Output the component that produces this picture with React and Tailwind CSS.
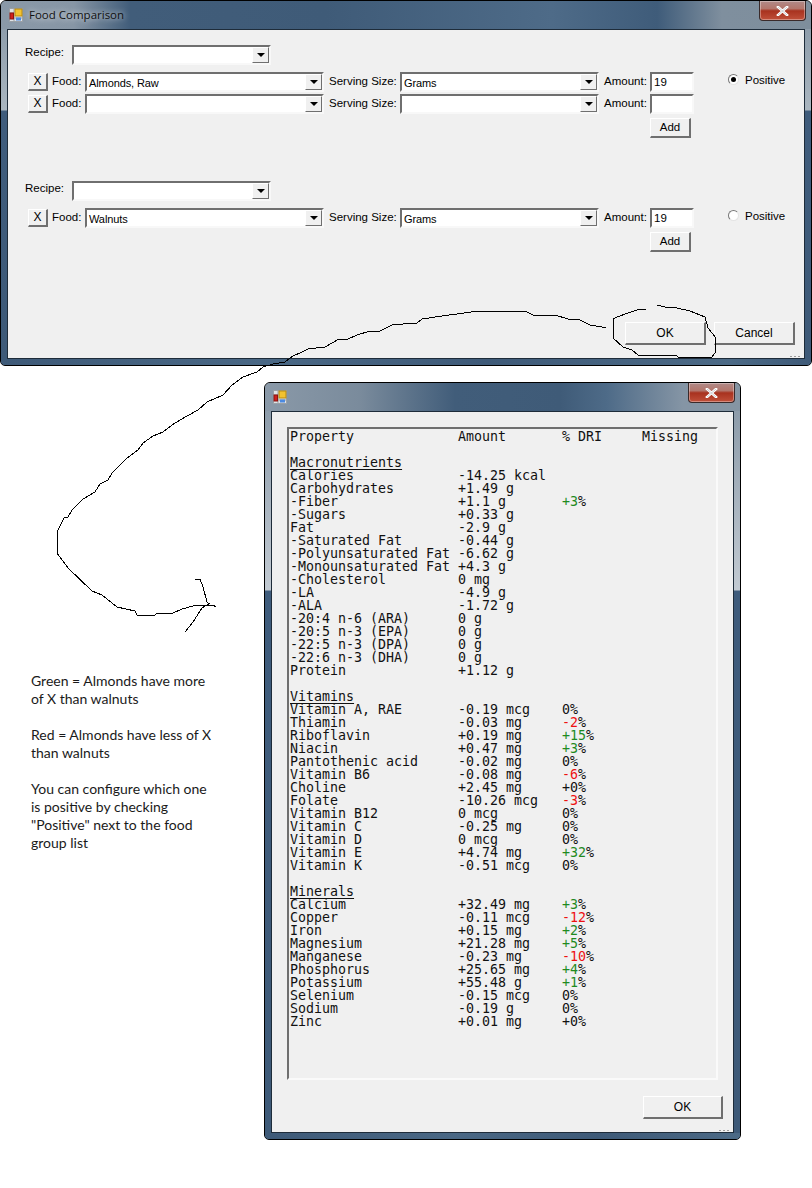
import React from "react";

const UI = "font-['Liberation_Sans',Arial,sans-serif] text-[11.5px] leading-[13px] text-black";

function Arrow() {
  return <span className="block w-0 h-0 border-l-[4px] border-r-[4px] border-t-[4px] border-l-transparent border-r-transparent border-t-black" />;
}

function Combo({ w, value }) {
  return (
    <div className={`${w} h-[20px] shrink-0 flex items-center bg-white border-2 border-t-[#6f6f6f] border-l-[#6f6f6f] border-r-[#f8f8f8] border-b-[#f8f8f8]`}>
      <span className="flex-1 pl-[2px] pt-[3px] text-[11px] tracking-[-0.1px]">{value}</span>
      <span className="w-[17px] h-[16px] flex items-center justify-center bg-[#f0f0f0] border border-t-white border-l-white border-r-[#6f6f6f] border-b-[#6f6f6f]">
        <Arrow />
      </span>
    </div>
  );
}

function Btn({ className, children }) {
  return (
    <div className={`${className} shrink-0 flex items-center justify-center bg-[#f0f0f0] border-t border-l border-t-white border-l-white border-r-2 border-b-2 border-r-[#6f6f6f] border-b-[#6f6f6f]`}>
      {children}
    </div>
  );
}

function Radio({ checked }) {
  return (
    <span className="mt-[1px] w-[11px] h-[11px] rounded-full bg-white border border-t-[#777777] border-l-[#777777] border-r-[#e4e4e4] border-b-[#e4e4e4] flex items-center justify-center">
      {checked && <span className="w-[5px] h-[5px] rounded-full bg-black" />}
    </span>
  );
}

function Recipe() {
  return (
    <div className="flex pl-[17px]">
      <span className="w-[47px] pt-[1px]">Recipe:</span>
      <Combo w="w-[199px]" value="" />
    </div>
  );
}

function FoodRow({ food, serving, amount, radio, className = "" }) {
  return (
    <div className={`flex pl-[20px] ${className}`}>
      <Btn className="w-[20px] h-[18px] mt-[1px] text-[12px]">X</Btn>
      <span className="ml-[4px] w-[33px] pt-[3px]">Food:</span>
      <Combo w="w-[239px]" value={food} />
      <span className="ml-[5px] w-[71px] pt-[3px]">Serving Size:</span>
      <Combo w="w-[199px]" value={serving} />
      <span className="ml-[5px] w-[46px] pt-[3px]">Amount:</span>
      <div className="w-[44px] h-[20px] shrink-0 pl-[2px] pt-[2px] bg-white border-2 border-t-[#6f6f6f] border-l-[#6f6f6f] border-r-[#f8f8f8] border-b-[#f8f8f8]">{amount}</div>
      {radio !== undefined && (
        <div className="flex ml-[34px] pt-[1px]">
          <Radio checked={radio} />
          <span className="ml-[6px] pt-[1px]">Positive</span>
        </div>
      )}
    </div>
  );
}

function AddRow() {
  return (
    <div className="pl-[642px] mt-[4px]">
      <Btn className="w-[41px] h-[20px]">Add</Btn>
    </div>
  );
}

function AppIcon() {
  return (
    <svg width="14" height="14" viewBox="0 0 14 14" className="shrink-0">
      <rect x="0.5" y="0.5" width="13" height="13" fill="#dfe3e6" stroke="#9aa0a6" />
      <path d="M0.5 5H5M5 0.5V13.5M5 10H13.5" stroke="#9aa0a6" fill="none" />
      <rect x="6" y="1" width="7" height="7" fill="#f2c230" stroke="#b88a10" />
      <rect x="1" y="5" width="3.5" height="6" fill="#d0201c" stroke="#8a1410" />
      <rect x="7" y="9.5" width="5" height="3" fill="#4c8ae0" />
    </svg>
  );
}

function CloseBtn() {
  return (
    <div className="w-[47px] h-[20px] flex items-center justify-center rounded-b-[4px] border border-t-0 border-[#3a2a2a] shadow-[inset_0_0_0_1px_rgba(255,255,255,0.35)] bg-[linear-gradient(180deg,#b08a88_0%,#b3766c_40%,#a8321f_52%,#c0503a_100%)]">
      <svg width="13" height="10" viewBox="0 0 13 10">
        <path d="M2 1L11 9M11 1L2 9" stroke="#ffffff" strokeWidth="2.6" strokeLinecap="square" />
        <path d="M2 1L11 9M11 1L2 9" stroke="#9aa0a8" strokeWidth="0.5" />
      </svg>
    </div>
  );
}

function Grip() {
  return (
    <div className="absolute right-[4px] bottom-[1px] flex gap-[2px]">
      <span className="w-[2px] h-[1px] bg-[#9a9a9a]" />
      <span className="w-[2px] h-[1px] bg-[#9a9a9a]" />
      <span className="w-[2px] h-[1px] bg-[#9a9a9a]" />
    </div>
  );
}

function FoodWindow() {
  return (
    <section className={`absolute left-0 top-0 w-[812px] h-[366px] flex flex-col rounded-t-[6px] rounded-b-[5px] border border-black overflow-hidden bg-[linear-gradient(180deg,#8595a4_0px,#aab6c0_109px,#3f5c7c_110px,#3e5a78_100%)] ${UI}`}>
      <header className="h-[28px] shrink-0 flex items-center pl-[8px] pr-[5px] bg-[linear-gradient(90deg,#8a99a8_0%,#8796a5_9%,#415d7a_16%,#3f5b78_40%,#4e6b88_68%,#3f5c7a_81%,#7f8f9e_89%,#7e8e9c_100%)]">
        <AppIcon />
        <h1 className="ml-[6px] mb-[2px] flex-1 font-['Open_Sans',sans-serif] text-[11.5px] font-normal text-[#111111] [text-shadow:0_0_6px_#ffffff]">Food Comparison</h1>
        <div className="self-start"><CloseBtn /></div>
      </header>
      <div className="relative flex-1 mx-[6px] flex flex-col bg-[#f0f0f0] border border-[#1e2c3a]">
        <div className="pt-[15px]">
          <Recipe />
          <FoodRow className="mt-[7px]" food="Almonds, Raw" serving="Grams" amount="19" radio={true} />
          <FoodRow className="mt-[2px]" food="" serving="" amount="" />
          <AddRow />
        </div>
        <div className="mt-[43px]">
          <Recipe />
          <FoodRow className="mt-[7px]" food="Walnuts" serving="Grams" amount="19" radio={false} />
          <AddRow />
        </div>
        <div className="mt-auto flex justify-end gap-[8px] pr-[9px] pb-[13px]">
          <Btn className="w-[81px] h-[23px] text-[12px]">OK</Btn>
          <Btn className="w-[81px] h-[23px] text-[12px]">Cancel</Btn>
        </div>
        <Grip />
      </div>
      <div className="h-[6px] shrink-0 bg-[linear-gradient(90deg,#3e5a78_0%,#4a6885_33%,#3e5a78_60%,#4c6a86_90%,#3e5a78_100%)]" />
    </section>
  );
}

const G = "text-[#1f8a1f]";
const R = "text-[#ee1111]";

const sections = [
  {
    title: "Macronutrients",
    rows: [
      ["Calories", "-14.25 kcal"],
      ["Carbohydrates", "+1.49 g"],
      ["-Fiber", "+1.1 g", "+3", "g"],
      ["-Sugars", "+0.33 g"],
      ["Fat", "-2.9 g"],
      ["-Saturated Fat", "-0.44 g"],
      ["-Polyunsaturated Fat", "-6.62 g"],
      ["-Monounsaturated Fat", "+4.3 g"],
      ["-Cholesterol", "0 mg"],
      ["-LA", "-4.9 g"],
      ["-ALA", "-1.72 g"],
      ["-20:4 n-6 (ARA)", "0 g"],
      ["-20:5 n-3 (EPA)", "0 g"],
      ["-22:5 n-3 (DPA)", "0 g"],
      ["-22:6 n-3 (DHA)", "0 g"],
      ["Protein", "+1.12 g"],
    ],
  },
  {
    title: "Vitamins",
    rows: [
      ["Vitamin A, RAE", "-0.19 mcg", "0"],
      ["Thiamin", "-0.03 mg", "-2", "r"],
      ["Riboflavin", "+0.19 mg", "+15", "g"],
      ["Niacin", "+0.47 mg", "+3", "g"],
      ["Pantothenic acid", "-0.02 mg", "0"],
      ["Vitamin B6", "-0.08 mg", "-6", "r"],
      ["Choline", "+2.45 mg", "+0"],
      ["Folate", "-10.26 mcg", "-3", "r"],
      ["Vitamin B12", "0 mcg", "0"],
      ["Vitamin C", "-0.25 mg", "0"],
      ["Vitamin D", "0 mcg", "0"],
      ["Vitamin E", "+4.74 mg", "+32", "g"],
      ["Vitamin K", "-0.51 mcg", "0"],
    ],
  },
  {
    title: "Minerals",
    rows: [
      ["Calcium", "+32.49 mg", "+3", "g"],
      ["Copper", "-0.11 mcg", "-12", "r"],
      ["Iron", "+0.15 mg", "+2", "g"],
      ["Magnesium", "+21.28 mg", "+5", "g"],
      ["Manganese", "-0.23 mg", "-10", "r"],
      ["Phosphorus", "+25.65 mg", "+4", "g"],
      ["Potassium", "+55.48 g", "+1", "g"],
      ["Selenium", "-0.15 mcg", "0"],
      ["Sodium", "-0.19 g", "0"],
      ["Zinc", "+0.01 mg", "+0"],
    ],
  },
];

function Row({ a, b, c, d }) {
  return (
    <div className="flex h-[13px] whitespace-pre">
      <span className="w-[168px]">{a}</span>
      <span className="w-[104px]">{b}</span>
      <span className="w-[80px]">
        {c !== undefined && (
          <>
            <span className={d === "g" ? G : d === "r" ? R : ""}>{c}</span>%
          </>
        )}
      </span>
    </div>
  );
}

function DetailWindow() {
  return (
    <section className={`absolute left-[264px] top-[382px] w-[477px] h-[758px] flex flex-col rounded-t-[6px] rounded-b-[5px] border border-black overflow-hidden bg-[linear-gradient(180deg,#8595a4_0px,#c2cad2_207px,#3f5c7c_208px,#3e5a78_100%)] ${UI}`}>
      <header className="h-[28px] shrink-0 flex items-center justify-between pl-[8px] pr-[5px] bg-[linear-gradient(90deg,#8a99a8_0%,#7a8b9c_20%,#415d7a_40%,#3f5b78_62%,#4e6b88_72%,#8595a5_88%,#8595a3_100%)]">
        <AppIcon />
        <div className="self-start"><CloseBtn /></div>
      </header>
      <div className="relative flex-1 mx-[6px] flex flex-col bg-[#f0f0f0] border border-[#1e2c3a]">
        <div className="ml-[15px] mt-[15px] w-[431px] h-[653px] pl-[1px] pt-[1px] border-2 border-t-[#6f6f6f] border-l-[#6f6f6f] border-r-[#fafafa] border-b-[#fafafa] font-['DejaVu_Sans_Mono',monospace] text-[13.3px] leading-[13px] text-[#111111]">
          <div className="flex h-[13px] whitespace-pre">
            <span className="w-[168px]">Property</span>
            <span className="w-[104px]">Amount</span>
            <span className="w-[80px]">% DRI</span>
            <span>Missing</span>
          </div>
          <div className="h-[13px]" />
          {sections.map((s) => (
            <div key={s.title} className="mb-[13px]">
              <div className="h-[13px] underline underline-offset-[2px]">{s.title}</div>
              {s.rows.map((r) => (
                <Row key={r[0]} a={r[0]} b={r[1]} c={r[2]} d={r[3]} />
              ))}
            </div>
          ))}
        </div>
        <div className="mt-auto flex justify-end pr-[10px] pb-[13px]">
          <Btn className="w-[80px] h-[23px] text-[12px]">OK</Btn>
        </div>
        <Grip />
      </div>
      <div className="h-[6px] shrink-0 bg-[linear-gradient(90deg,#3e5a78_0%,#4a6885_40%,#3e5a78_70%,#4c6a86_100%)]" />
    </section>
  );
}

const curve = "606,327 602,327 590,325 578,319 568,319 555,315 533,315 525,311 478,311 457,314 442,316 422,319 417,323 403,324 392,325 380,331 370,331 357,335 348,339 339,339 325,347 308,349 302,352 293,356 285,362 273,364 263,367 257,372 243,377 232,385 223,395 207,402 198,410 187,416 175,423 163,432 153,436 143,443 138,450 127,458 112,473 108,480 100,484 95,492 83,499 72,510 68,517 64,518 57,532 57,553 68,568 92,591 102,595 117,607 135,611 137,615 155,615 157,613 173,613 182,609 193,606 213,605 216,607";
const head1 = "195,579 200,579 203,587 207,602 209,604";
const head2 = "210,603 202,608 193,622 185,632";
const loop = "646,309 637,310 628,313 617,317 613,319 613,338 623,347 632,350 638,355 677,356 678,357 712,357 715,353 716,338 708,328 705,317 690,311 677,308 665,307 657,305";

function Scribble() {
  return (
    <svg className="absolute left-0 top-0 pointer-events-none" width="812" height="1188" viewBox="0 0 812 1188" fill="none" stroke="#000000" strokeWidth="1" shapeRendering="crispEdges">
      <polyline points={curve} />
      <polyline points={head1} />
      <polyline points={head2} />
      <polyline points={loop} />
    </svg>
  );
}

function Note() {
  return (
    <aside className="absolute left-[31px] top-[672px] font-['Lato',sans-serif] text-[14px] leading-[18px] text-[#1a1a1a] whitespace-nowrap">
      <p>Green = Almonds have more<br />of X than walnuts</p>
      <p className="mt-[18px]">Red = Almonds have less of X<br />than walnuts</p>
      <p className="mt-[18px]">You can configure which one<br />is positive by checking<br />"Positive" next to the food<br />group list</p>
    </aside>
  );
}

export default function App() {
  return (
    <main className="relative w-[812px] h-[1188px] bg-white overflow-hidden">
      <FoodWindow />
      <Note />
      <DetailWindow />
      <Scribble />
    </main>
  );
}
